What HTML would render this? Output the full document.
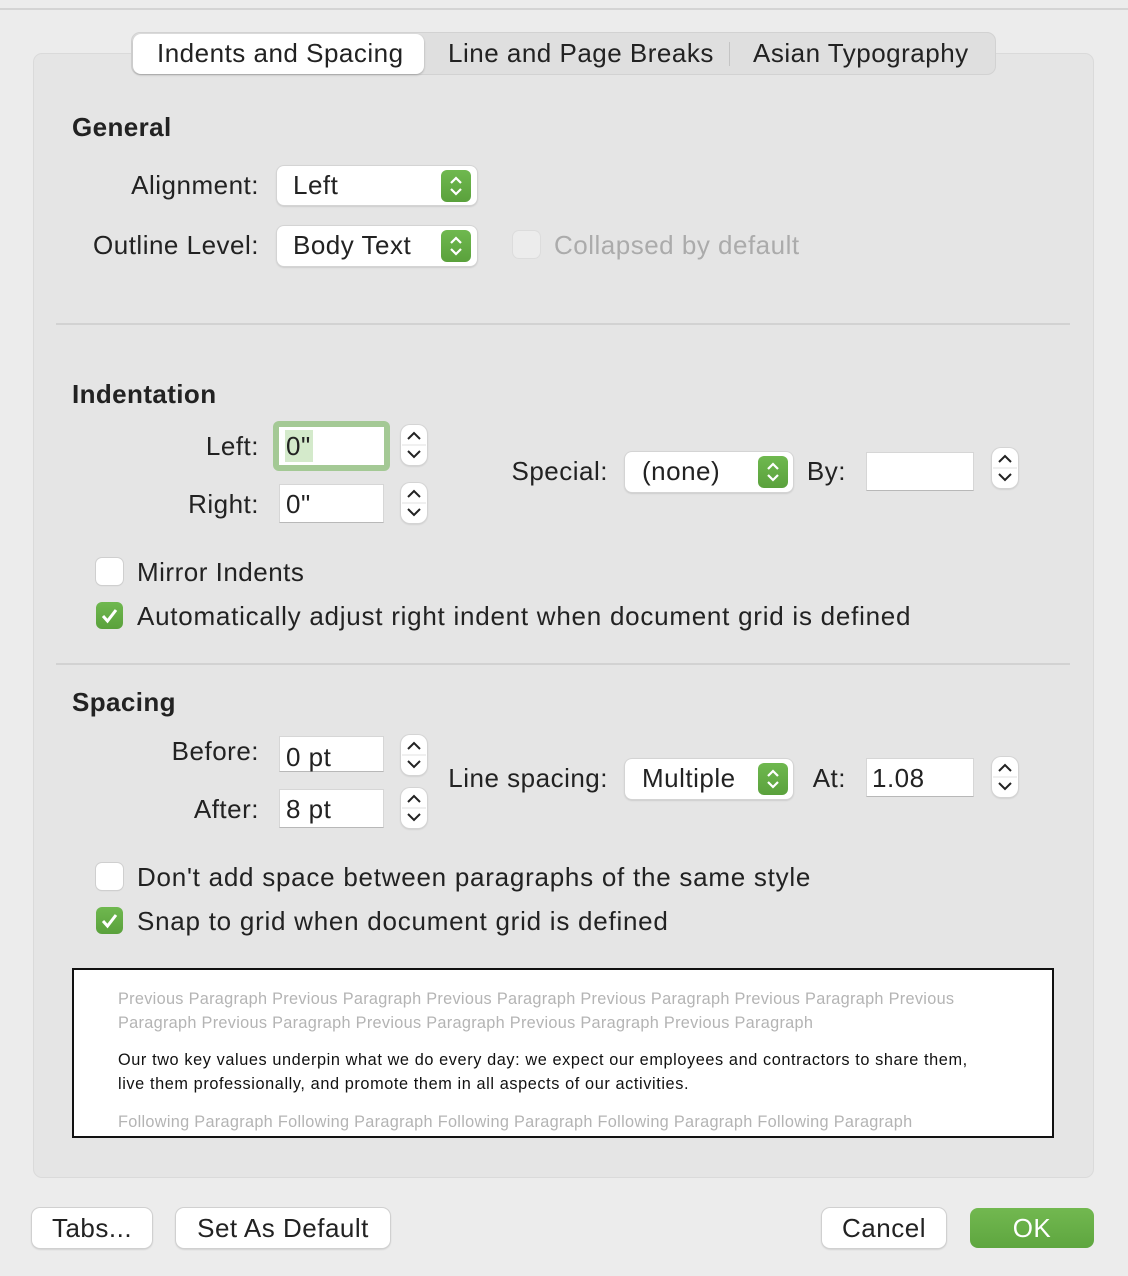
<!DOCTYPE html>
<html><head><meta charset="utf-8"><style>
*{box-sizing:border-box;margin:0;padding:0}
body{width:1128px;height:1276px;background:#ececec;font-family:"Liberation Sans",sans-serif;color:#222;position:relative;overflow:hidden;font-size:26px;letter-spacing:0.5px}
.a{position:absolute}
.t{position:absolute;line-height:30px;white-space:nowrap}
.r{text-align:right}
.b{font-weight:bold;letter-spacing:0.4px}
.pop{position:absolute;background:#fff;border-radius:7px;box-shadow:0 0 0 1px #d4d4d4,0 1px 2px rgba(0,0,0,.25)}
.gr{position:absolute;background:linear-gradient(#6fb84f,#5aa13c);border-radius:6px}
.fld{position:absolute;background:#fff;border:1px solid #d6d6d6;border-bottom-color:#b8b8b8}
.stp{position:absolute;width:26px;background:#fff;border-radius:9px;box-shadow:0 0 0 1px #d4d4d4,0 1px 2px rgba(0,0,0,.2)}
.cb{position:absolute;width:27px;height:27px;border-radius:6px;background:#fff;box-shadow:0 0 0 1px #cfcfcf,0 1px 1px rgba(0,0,0,.15)}
.cbk{background:linear-gradient(#6fb84f,#5aa13c);box-shadow:none}
.sep{position:absolute;left:56px;width:1014px;height:2px;background:#d2d2d2}
.btn{position:absolute;height:40px;background:#fff;border-radius:8px;box-shadow:0 0 0 1px #d0d0d0,0 1px 2px rgba(0,0,0,.25);text-align:center;line-height:40px}
</style></head><body>
<div class="a" style="left:0;top:8px;width:1128px;height:2px;background:#d4d4d4"></div>
<div class="a" style="left:33px;top:53px;width:1061px;height:1125px;background:#e5e5e5;border:1px solid #dadada;border-radius:9px"></div>
<div class="a" style="left:131px;top:32px;width:865px;height:43px;background:#dfdfdf;border:1px solid #d2d2d2;border-radius:9px"></div>
<div class="a" style="left:133px;top:34px;width:291px;height:40px;background:#fff;border-radius:8px;box-shadow:0 1px 2px rgba(0,0,0,.25)"></div>
<div class="t" style="left:157px;top:38px">Indents and Spacing</div>
<div class="t" style="left:448px;top:38px">Line and Page Breaks</div>
<div class="a" style="left:729px;top:42px;width:1px;height:24px;background:#c4c4c4"></div>
<div class="t" style="left:753px;top:38px">Asian Typography</div>

<div class="t b" style="left:72px;top:112px">General</div>
<div class="t r" style="left:0;width:259px;top:170px">Alignment:</div>
<div class="pop" style="left:277px;top:166px;width:200px;height:39px"></div>
<div class="t" style="left:293px;top:170px">Left</div>
<svg class="gr" style="left:441px;top:170px" width="30" height="32" viewBox="0 0 30 32"><path d="M10 13l5-5 5 5M10 19l5 5 5-5" fill="none" stroke="#fff" stroke-width="2.2"/></svg>
<div class="t r" style="left:0;width:259px;top:230px">Outline Level:</div>
<div class="pop" style="left:277px;top:226px;width:200px;height:40px"></div>
<div class="t" style="left:293px;top:230px">Body Text</div>
<svg class="gr" style="left:441px;top:230px" width="30" height="32" viewBox="0 0 30 32"><path d="M10 13l5-5 5 5M10 19l5 5 5-5" fill="none" stroke="#fff" stroke-width="2.2"/></svg>
<div class="cb" style="left:513px;top:231px;background:#ececec;box-shadow:0 0 0 1px #dcdcdc"></div>
<div class="t" style="left:554px;top:230px;color:#ababab">Collapsed by default</div>
<div class="sep" style="top:323px"></div>

<div class="t b" style="left:72px;top:379px">Indentation</div>
<div class="t r" style="left:0;width:259px;top:431px">Left:</div>
<div class="a" style="left:273px;top:421px;width:117px;height:50px;border-radius:6px;background:#a4c995"></div>
<div class="fld" style="left:279px;top:427px;width:105px;height:38px;border:none"></div>
<div class="a" style="left:285px;top:430px;width:28px;height:32px;background:#d4eacb"></div>
<div class="t" style="left:286px;top:431px">0"</div>
<svg class="stp" style="left:401px;top:425px" height="40" viewBox="0 0 26 40"><path d="M7 14l6-6 6 6M7 26l6 6 6-6" fill="none" stroke="#222" stroke-width="2"/><path d="M1 20h24" stroke="#e2e2e2"/></svg>
<div class="t r" style="left:0;width:259px;top:489px">Right:</div>
<div class="fld" style="left:279px;top:484px;width:105px;height:39px"></div>
<div class="t" style="left:286px;top:489px">0"</div>
<svg class="stp" style="left:401px;top:483px" height="40" viewBox="0 0 26 40"><path d="M7 14l6-6 6 6M7 26l6 6 6-6" fill="none" stroke="#222" stroke-width="2"/><path d="M1 20h24" stroke="#e2e2e2"/></svg>
<div class="t r" style="left:0;width:608px;top:456px">Special:</div>
<div class="pop" style="left:625px;top:452px;width:168px;height:40px"></div>
<div class="t" style="left:642px;top:456px">(none)</div>
<svg class="gr" style="left:758px;top:456px" width="30" height="32" viewBox="0 0 30 32"><path d="M10 13l5-5 5 5M10 19l5 5 5-5" fill="none" stroke="#fff" stroke-width="2.2"/></svg>
<div class="t r" style="left:0;width:846px;top:456px">By:</div>
<div class="fld" style="left:866px;top:452px;width:108px;height:39px"></div>
<svg class="stp" style="left:992px;top:448px" height="40" viewBox="0 0 26 40"><path d="M7 14l6-6 6 6M7 26l6 6 6-6" fill="none" stroke="#222" stroke-width="2"/><path d="M1 20h24" stroke="#e2e2e2"/></svg>
<div class="cb" style="left:96px;top:558px"></div>
<div class="t" style="left:137px;top:557px">Mirror Indents</div>
<svg class="cb cbk" style="left:96px;top:602px" viewBox="0 0 27 27"><path d="M7 14l4.5 5L20 8" fill="none" stroke="#fff" stroke-width="3"/></svg>
<div class="t" style="left:137px;top:601px;letter-spacing:0.75px">Automatically adjust right indent when document grid is defined</div>
<div class="sep" style="top:663px"></div>

<div class="t b" style="left:72px;top:687px">Spacing</div>
<div class="t r" style="left:0;width:259px;top:736px">Before:</div>
<div class="fld" style="left:279px;top:736px;width:105px;height:36px"></div>
<div class="t" style="left:286px;top:742px">0 pt</div>
<svg class="stp" style="left:401px;top:735px" height="40" viewBox="0 0 26 40"><path d="M7 14l6-6 6 6M7 26l6 6 6-6" fill="none" stroke="#222" stroke-width="2"/><path d="M1 20h24" stroke="#e2e2e2"/></svg>
<div class="t r" style="left:0;width:259px;top:794px">After:</div>
<div class="fld" style="left:279px;top:789px;width:105px;height:39px"></div>
<div class="t" style="left:286px;top:794px">8 pt</div>
<svg class="stp" style="left:401px;top:788px" height="40" viewBox="0 0 26 40"><path d="M7 14l6-6 6 6M7 26l6 6 6-6" fill="none" stroke="#222" stroke-width="2"/><path d="M1 20h24" stroke="#e2e2e2"/></svg>
<div class="t r" style="left:0;width:608px;top:763px">Line spacing:</div>
<div class="pop" style="left:625px;top:759px;width:168px;height:40px"></div>
<div class="t" style="left:642px;top:763px">Multiple</div>
<svg class="gr" style="left:758px;top:763px" width="30" height="32" viewBox="0 0 30 32"><path d="M10 13l5-5 5 5M10 19l5 5 5-5" fill="none" stroke="#fff" stroke-width="2.2"/></svg>
<div class="t r" style="left:0;width:846px;top:763px">At:</div>
<div class="fld" style="left:866px;top:758px;width:108px;height:39px"></div>
<div class="t" style="left:872px;top:763px">1.08</div>
<svg class="stp" style="left:992px;top:757px" height="40" viewBox="0 0 26 40"><path d="M7 14l6-6 6 6M7 26l6 6 6-6" fill="none" stroke="#222" stroke-width="2"/><path d="M1 20h24" stroke="#e2e2e2"/></svg>
<div class="cb" style="left:96px;top:863px"></div>
<div class="t" style="left:137px;top:862px;letter-spacing:0.75px">Don't add space between paragraphs of the same style</div>
<svg class="cb cbk" style="left:96px;top:907px" viewBox="0 0 27 27"><path d="M7 14l4.5 5L20 8" fill="none" stroke="#fff" stroke-width="3"/></svg>
<div class="t" style="left:137px;top:906px;letter-spacing:0.75px">Snap to grid when document grid is defined</div>

<div class="a" style="left:72px;top:968px;width:982px;height:170px;background:#fff;border:2px solid #111"></div>
<div class="a" style="left:118px;top:987px;width:920px;font-size:16.3px;line-height:24px;color:#b4b4b4;letter-spacing:0.3px;white-space:nowrap">Previous Paragraph Previous Paragraph Previous Paragraph Previous Paragraph Previous Paragraph Previous<br>Paragraph Previous Paragraph Previous Paragraph Previous Paragraph Previous Paragraph</div>
<div class="a" style="left:118px;top:1048px;width:920px;font-size:16.3px;line-height:24px;color:#111;letter-spacing:0.6px;white-space:nowrap">Our two key values underpin what we do every day: we expect our employees and contractors to share them,<br>live them professionally, and promote them in all aspects of our activities.</div>
<div class="a" style="left:118px;top:1110px;width:920px;font-size:16.3px;line-height:24px;color:#b4b4b4;letter-spacing:0.3px;white-space:nowrap">Following Paragraph Following Paragraph Following Paragraph Following Paragraph Following Paragraph</div>

<div class="btn" style="left:32px;top:1208px;width:120px">Tabs...</div>
<div class="btn" style="left:176px;top:1208px;width:214px">Set As Default</div>
<div class="btn" style="left:822px;top:1208px;width:124px">Cancel</div>
<div class="btn" style="left:970px;top:1208px;width:124px;background:linear-gradient(#72b850,#5ea63f);color:#fff;box-shadow:none">OK</div>
</body></html>
